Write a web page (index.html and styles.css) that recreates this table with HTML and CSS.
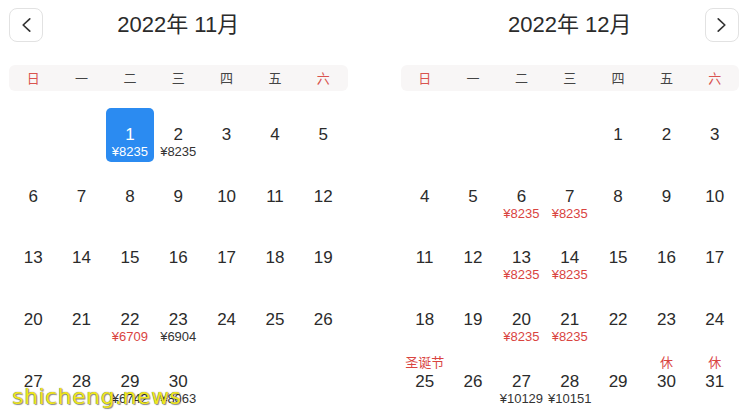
FILE: index.html
```html
<!DOCTYPE html>
<html lang="zh">
<head>
    <meta charset="UTF-8">
    <meta name="viewport" content="width=device-width, initial-scale=1.0">
    <title>选择日期</title>
    <link rel="stylesheet" href="styles.css">
</head>
<body>
<div class="calendar">
    <!-- 11月 -->
    <div class="month">
        <div class="month-head">
            <button class="nav-btn" type="button" aria-label="上个月">
                <svg width="34" height="34" viewBox="0 0 34 34"><polyline points="21,10.5 14,17 21,23.5" fill="none" stroke="#333" stroke-width="1.8" stroke-linecap="round" stroke-linejoin="round"/></svg>
            </button>
            <div class="month-title">2022年 11月</div>
            <span></span>
        </div>
        <div class="week">
            <span class="weekend">日</span><span>一</span><span>二</span><span>三</span><span>四</span><span>五</span><span class="weekend">六</span>
        </div>
        <div class="days">
            <div></div><div></div>
            <div class="day selected"><span class="num">1</span><span class="price">¥8235</span></div>
            <div class="day"><span class="num">2</span><span class="price">¥8235</span></div>
            <div class="day"><span class="num">3</span></div>
            <div class="day"><span class="num">4</span></div>
            <div class="day"><span class="num">5</span></div>

            <div class="day"><span class="num">6</span></div>
            <div class="day"><span class="num">7</span></div>
            <div class="day"><span class="num">8</span></div>
            <div class="day"><span class="num">9</span></div>
            <div class="day"><span class="num">10</span></div>
            <div class="day"><span class="num">11</span></div>
            <div class="day"><span class="num">12</span></div>

            <div class="day"><span class="num">13</span></div>
            <div class="day"><span class="num">14</span></div>
            <div class="day"><span class="num">15</span></div>
            <div class="day"><span class="num">16</span></div>
            <div class="day"><span class="num">17</span></div>
            <div class="day"><span class="num">18</span></div>
            <div class="day"><span class="num">19</span></div>

            <div class="day"><span class="num">20</span></div>
            <div class="day"><span class="num">21</span></div>
            <div class="day"><span class="num">22</span><span class="price red">¥6709</span></div>
            <div class="day"><span class="num">23</span><span class="price">¥6904</span></div>
            <div class="day"><span class="num">24</span></div>
            <div class="day"><span class="num">25</span></div>
            <div class="day"><span class="num">26</span></div>

            <div class="day"><span class="num">27</span></div>
            <div class="day"><span class="num">28</span></div>
            <div class="day"><span class="num">29</span><span class="price">¥6742</span></div>
            <div class="day"><span class="num">30</span><span class="price">¥8063</span></div>
        </div>
    </div>

    <!-- 12月 -->
    <div class="month">
        <div class="month-head">
            <span></span>
            <div class="month-title">2022年 12月</div>
            <button class="nav-btn" type="button" aria-label="下个月">
                <svg width="34" height="34" viewBox="0 0 34 34"><polyline points="13,10.5 20,17 13,23.5" fill="none" stroke="#333" stroke-width="1.8" stroke-linecap="round" stroke-linejoin="round"/></svg>
            </button>
        </div>
        <div class="week">
            <span class="weekend">日</span><span>一</span><span>二</span><span>三</span><span>四</span><span>五</span><span class="weekend">六</span>
        </div>
        <div class="days">
            <div></div><div></div><div></div><div></div>
            <div class="day"><span class="num">1</span></div>
            <div class="day"><span class="num">2</span></div>
            <div class="day"><span class="num">3</span></div>

            <div class="day"><span class="num">4</span></div>
            <div class="day"><span class="num">5</span></div>
            <div class="day"><span class="num">6</span><span class="price red">¥8235</span></div>
            <div class="day"><span class="num">7</span><span class="price red">¥8235</span></div>
            <div class="day"><span class="num">8</span></div>
            <div class="day"><span class="num">9</span></div>
            <div class="day"><span class="num">10</span></div>

            <div class="day"><span class="num">11</span></div>
            <div class="day"><span class="num">12</span></div>
            <div class="day"><span class="num">13</span><span class="price red">¥8235</span></div>
            <div class="day"><span class="num">14</span><span class="price red">¥8235</span></div>
            <div class="day"><span class="num">15</span></div>
            <div class="day"><span class="num">16</span></div>
            <div class="day"><span class="num">17</span></div>

            <div class="day"><span class="num">18</span></div>
            <div class="day"><span class="num">19</span></div>
            <div class="day"><span class="num">20</span><span class="price red">¥8235</span></div>
            <div class="day"><span class="num">21</span><span class="price red">¥8235</span></div>
            <div class="day"><span class="num">22</span></div>
            <div class="day"><span class="num">23</span></div>
            <div class="day"><span class="num">24</span></div>

            <div class="day"><span class="tag">圣诞节</span><span class="num">25</span></div>
            <div class="day"><span class="num">26</span></div>
            <div class="day"><span class="num">27</span><span class="price">¥10129</span></div>
            <div class="day"><span class="num">28</span><span class="price">¥10151</span></div>
            <div class="day"><span class="num">29</span></div>
            <div class="day"><span class="tag">休</span><span class="num">30</span></div>
            <div class="day"><span class="tag">休</span><span class="num">31</span></div>
        </div>
    </div>
</div>

<div class="watermark">shicheng.news</div>
</body>
</html>
```

FILE: styles.css
```css
body {
    margin: 0;
    padding: 8px 15px 0 9px;
    background: #fff;
    color: #2b2b2b;
    font-family: "Liberation Sans", "Noto Sans CJK SC", sans-serif;
    overflow: hidden;
}
.calendar {
    display: flex;
    gap: 53px;
}
.month {
    flex: 1;
}
.month-head {
    display: grid;
    grid-template-columns: 34px 1fr 34px;
    height: 34px;
    align-items: center;
}
.nav-btn {
    width: 34px;
    height: 34px;
    padding: 0;
    border: 1px solid #e2e2e2;
    border-radius: 8px;
    background: #fff;
    display: flex;
    align-items: center;
    justify-content: center;
}
.nav-btn svg {
    display: block;
}
.month-title {
    text-align: center;
    font-size: 22px;
    line-height: 34px;
    color: #2b2b2b;
}
.week {
    margin-top: 23px;
    height: 26px;
    display: grid;
    grid-template-columns: repeat(7, 1fr);
    background-color: #f8f6f6;
    border-radius: 6px;
    font-family: "Noto Sans CJK SC", sans-serif;
    font-size: 13px;
    line-height: 26px;
    text-align: center;
    color: #444;
}
.week .weekend {
    color: #d9534f;
}
.days {
    margin-top: 17px;
    display: grid;
    grid-template-columns: repeat(7, 1fr);
    grid-auto-rows: 54px;
    row-gap: 7.7px;
}
.day {
    display: grid;
    grid-template-rows: 17px 20px 14px;
    justify-items: center;
    align-content: start;
    text-align: center;
    border-radius: 5px;
}
.day .tag {
    grid-row: 1;
    font-family: "Noto Sans CJK SC", sans-serif;
    font-size: 13px;
    line-height: 14px;
    color: #d9443f;
}
.day .num {
    grid-row: 2;
    font-size: 17px;
    line-height: 20px;
}
.day .price {
    grid-row: 3;
    font-size: 13px;
    line-height: 14px;
    color: #333;
    white-space: nowrap;
}
.day .price.red {
    color: #d9443f;
}
.day.selected {
    background-color: #2b8bf1;
    color: #fff;
}
.day.selected .price {
    color: #fff;
}
.watermark {
    position: absolute;
    left: 12px;
    top: 384px;
    font-family: "DejaVu Sans", sans-serif;
    font-size: 22px;
    letter-spacing: 0.5px;
    color: #efe61c;
    text-shadow: 0 0 1px #555, 1px 1px 1px rgba(0, 0, 0, 0.45);
}
```
